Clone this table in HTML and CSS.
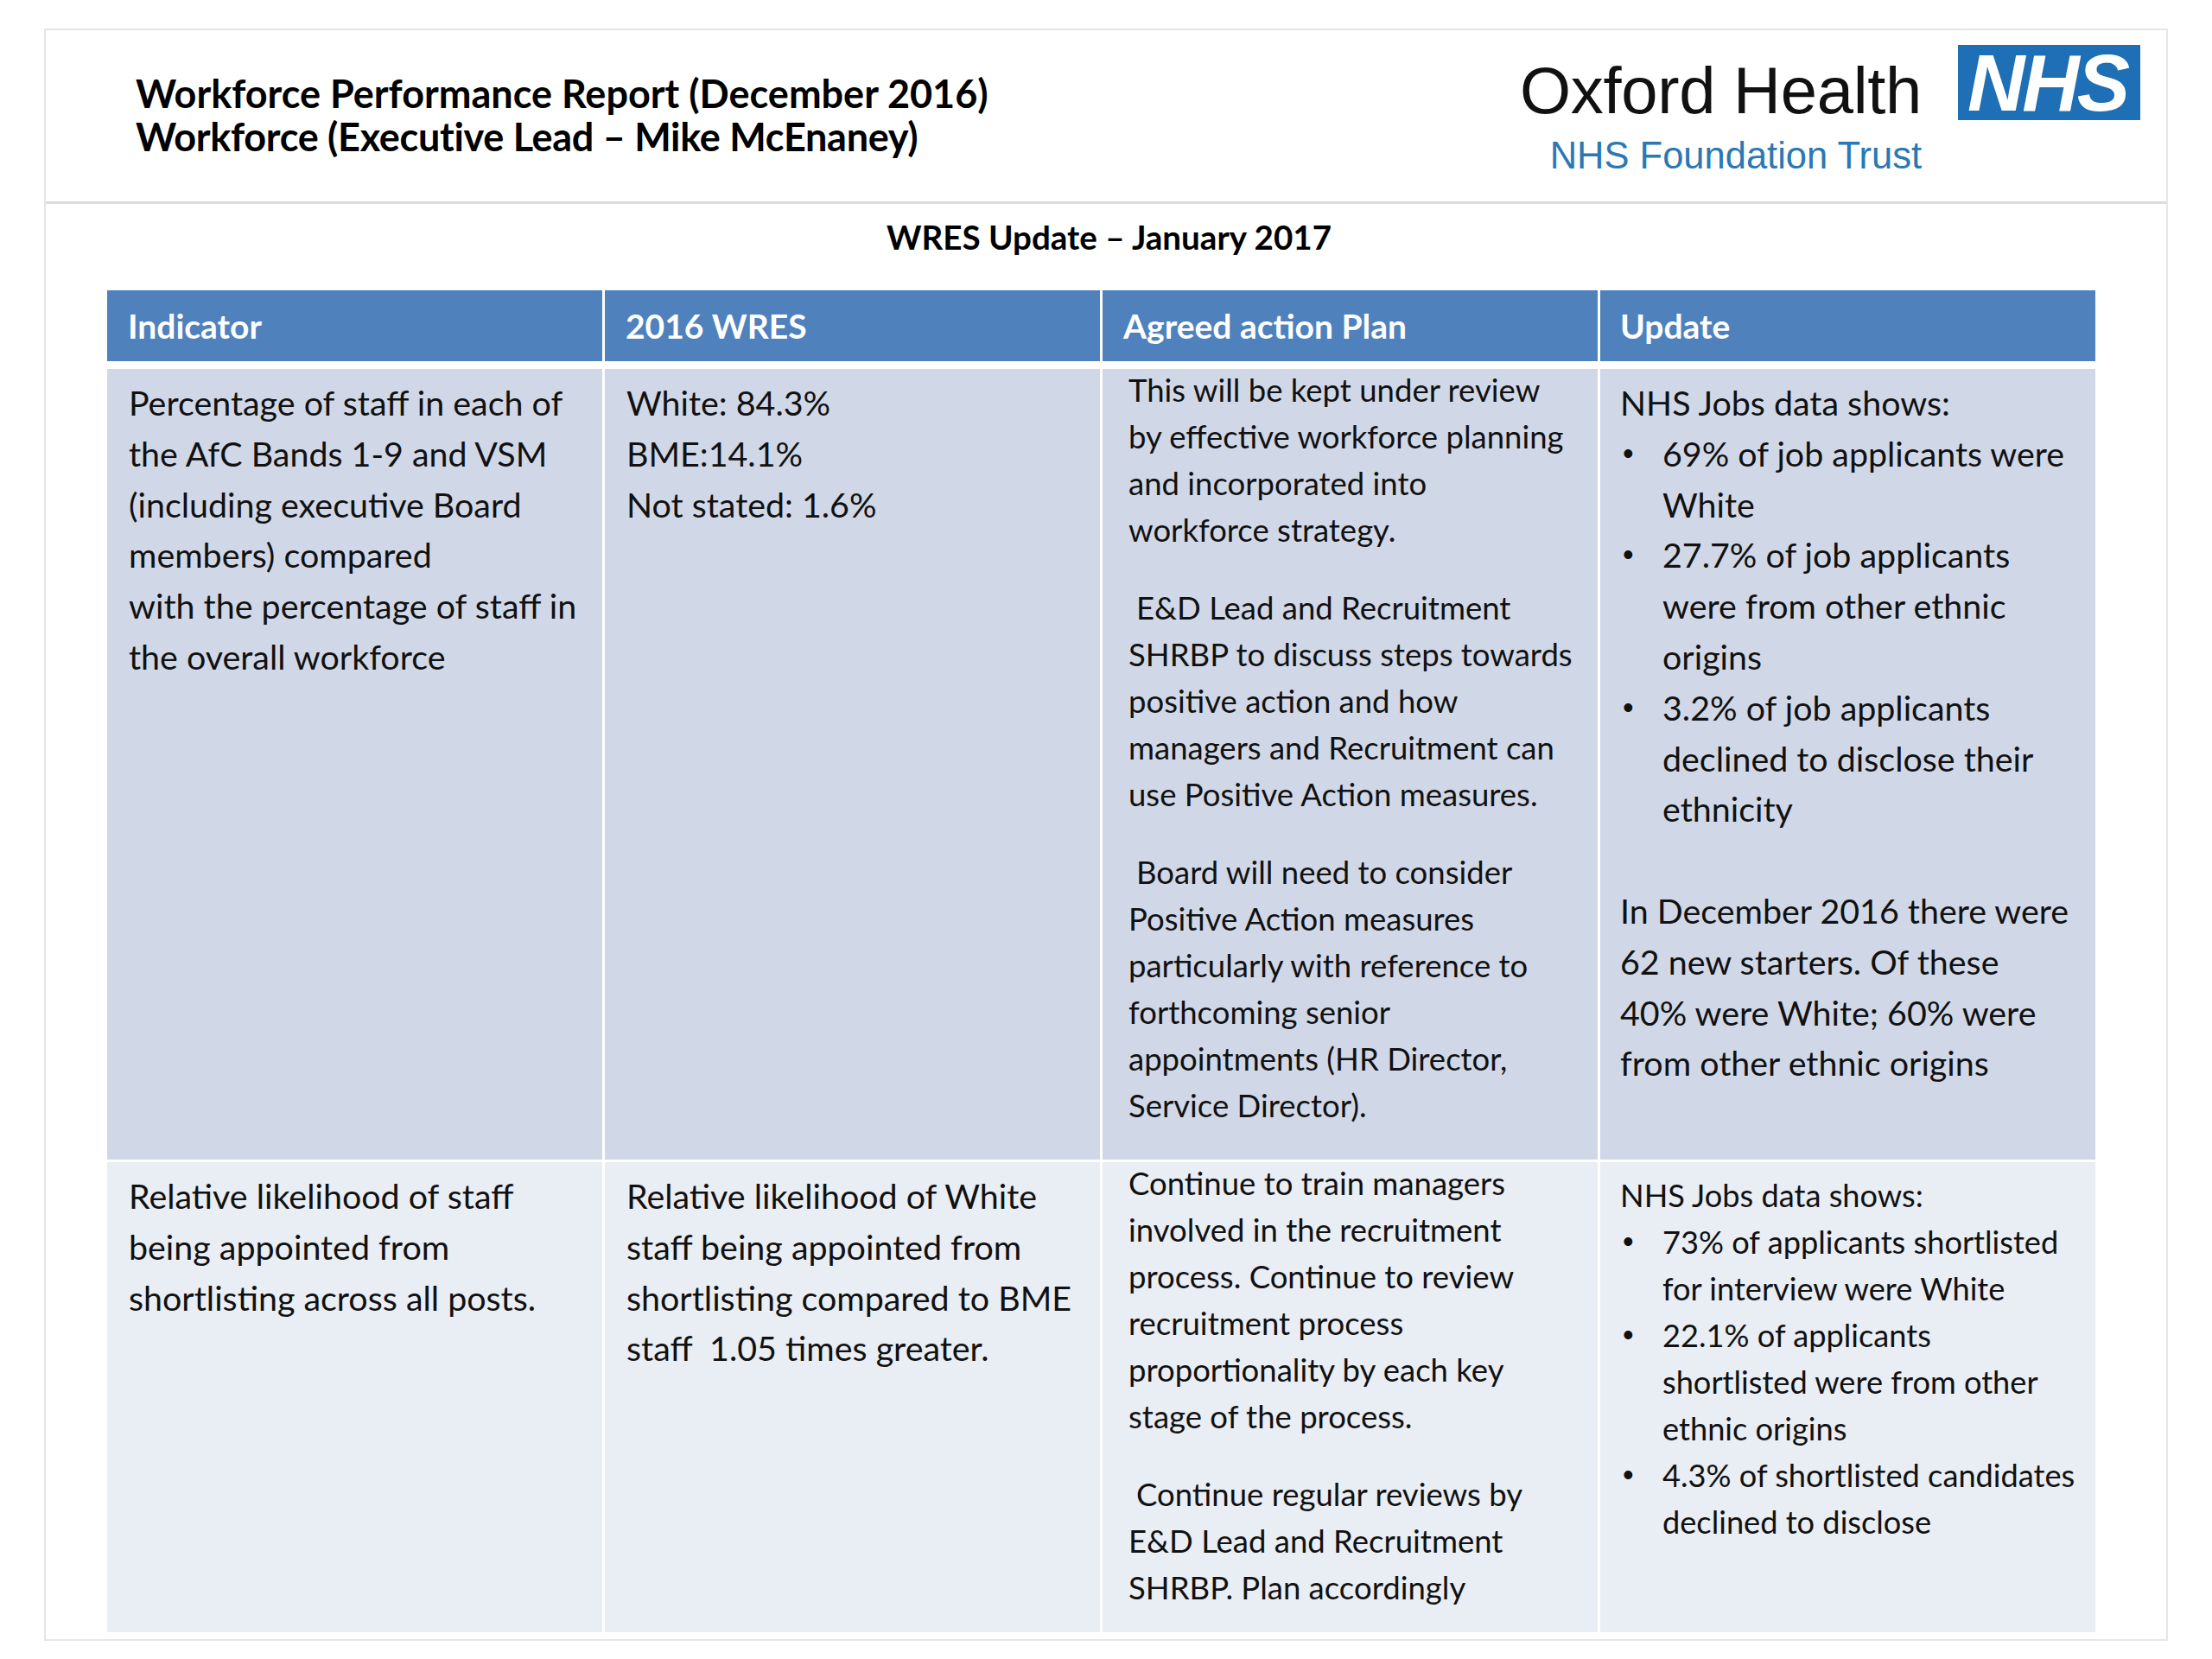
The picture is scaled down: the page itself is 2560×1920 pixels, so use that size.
FILE: index.html
```html
<!DOCTYPE html>
<html lang="en">
<head>
<meta charset="utf-8">
<title>WRES Update – January 2017</title>
<link rel="stylesheet" href="styles.css">
</head>
<body>
<div class="card">
  <header class="top">
    <div class="titles">
      <div>Workforce Performance Report (December 2016)</div>
      <div>Workforce (Executive Lead – Mike McEnaney)</div>
    </div>
    <div class="brand">
      <span class="oh">Oxford Health</span>
      <span class="nhs">NHS</span>
      <span class="trust">NHS Foundation Trust</span>
    </div>
  </header>
  <main class="content">
    <h1 class="sub">WRES Update – January 2017</h1>
    <div class="tbl">
      <div class="th">Indicator</div>
      <div class="th">2016 WRES</div>
      <div class="th">Agreed action Plan</div>
      <div class="th">Update</div>

      <div class="td r1 big">Percentage of staff in each of<br>the AfC Bands 1-9 and VSM<br>(including executive Board<br>members) compared<br>with the percentage of staff in<br>the overall workforce</div>
      <div class="td r1 big">White: 84.3%<br>BME:14.1%<br>Not stated: 1.6%</div>
      <div class="td r1 small plan">
        <p>This will be kept under review<br>by effective workforce planning<br>and incorporated into<br>workforce strategy.</p>
        <p class="ind">E&amp;D Lead and Recruitment<br>SHRBP to discuss steps towards<br>positive action and how<br>managers and Recruitment can<br>use Positive Action measures.</p>
        <p class="ind">Board will need to consider<br>Positive Action measures<br>particularly with reference to<br>forthcoming senior<br>appointments (HR Director,<br>Service Director).</p>
      </div>
      <div class="td r1 big upd">
        <p>NHS Jobs data shows:</p>
        <ul>
          <li><span class="b">•</span><span>69% of job applicants were<br>White</span></li>
          <li><span class="b">•</span><span>27.7% of job applicants<br>were from other ethnic<br>origins</span></li>
          <li><span class="b">•</span><span>3.2% of job applicants<br>declined to disclose their<br>ethnicity</span></li>
        </ul>
        <p class="gap">In December 2016 there were<br>62 new starters. Of these<br>40% were White; 60% were<br>from other ethnic origins</p>
      </div>

      <div class="td r2 big">Relative likelihood of staff<br>being appointed from<br>shortlisting across all posts.</div>
      <div class="td r2 big">Relative likelihood of White<br>staff being appointed from<br>shortlisting compared to BME<br>staff&nbsp; 1.05 times greater.</div>
      <div class="td r2 small plan">
        <p>Continue to train managers<br>involved in the recruitment<br>process. Continue to review<br>recruitment process<br>proportionality by each key<br>stage of the process.</p>
        <p class="ind">Continue regular reviews by<br>E&amp;D Lead and Recruitment<br>SHRBP. Plan accordingly</p>
      </div>
      <div class="td r2 small upd upd2">
        <p>NHS Jobs data shows:</p>
        <ul>
          <li><span class="b">•</span><span>73% of applicants shortlisted<br>for interview were White</span></li>
          <li><span class="b">•</span><span>22.1% of applicants<br>shortlisted were from other<br>ethnic origins</span></li>
          <li><span class="b">•</span><span>4.3% of shortlisted candidates<br>declined to disclose</span></li>
        </ul>
      </div>
    </div>
  </main>
</div>
</body>
</html>
```

FILE: styles.css
```css
html, body {
  margin: 0;
  padding: 0;
  background: #ffffff;
}

body {
  font-family: Lato, "Open Sans", sans-serif;
  color: #111111;
}

.card {
  box-sizing: border-box;
  width: 2458px;
  height: 1866px;
  margin: 33px 0 0 51px;
  border: 2px solid #e6e6e6;
  background: #ffffff;
}

.top {
  box-sizing: border-box;
  height: 201px;
  border-bottom: 3px solid #dcdcdc;
  display: flex;
  justify-content: space-between;
  align-items: center;
  padding: 0 30px 0 104px;
}

.titles {
  font-weight: 700;
  font-size: 45px;
  line-height: 50px;
  color: #000000;
  padding-bottom: 2px;
}

.titles div + div {
  letter-spacing: -0.3px;
}

.brand {
  align-self: flex-start;
  margin-top: 17px;
  display: grid;
  grid-template-columns: auto 211px;
  column-gap: 42px;
  font-family: "Liberation Sans", Arial, sans-serif;
}

.oh {
  font-size: 76px;
  line-height: 76px;
  padding-top: 15px;
  color: #111111;
  text-align: right;
  letter-spacing: -0.3px;
}

.nhs {
  height: 87px;
  background: #1f6fb6;
  color: #ffffff;
  font-weight: 700;
  font-style: italic;
  font-size: 92px;
  line-height: 88px;
  letter-spacing: -3px;
  text-align: center;
  padding-right: 4px;
  box-sizing: border-box;
}

.trust {
  grid-column: 1;
  text-align: right;
  font-size: 43.5px;
  line-height: 44px;
  margin-top: 15px;
  color: #2a78b4;
}

.content {
  padding: 13px 0 0 71px;
}

.sub {
  box-sizing: border-box;
  margin: 0 0 37px 0;
  width: 2301px;
  padding-left: 18px;
  text-align: center;
  font-size: 38.6px;
  line-height: 50px;
  font-weight: 700;
  color: #000000;
}

.tbl {
  width: 2301px;
  display: grid;
  grid-template-columns: repeat(4, 1fr);
  grid-template-rows: 88px 915px 544px;
  column-gap: 3px;
  row-gap: 3px;
}

.th {
  box-sizing: border-box;
  height: 82px;
  background: #4f81bd;
  color: #ffffff;
  font-weight: 700;
  font-size: 39px;
  display: flex;
  align-items: center;
  padding-left: 24px;
  white-space: nowrap;
}

.th:nth-child(4) { padding-left: 23px; }

.td {
  box-sizing: border-box;
  white-space: nowrap;
  padding-left: 25px;
}

.r1 { background: #d0d8e8; }
.r2 { background: #e9edf4; }

.big {
  font-size: 39.4px;
  line-height: 58.8px;
  padding-top: 10px;
}

.small {
  font-size: 36.5px;
  line-height: 54px;
  padding-top: 0;
}

.td p { margin: 0; }

.plan { padding-left: 30px; }
.plan p:first-child { margin-top: -3px; }
.plan p + p { margin-top: 36px; }
.plan .ind { text-indent: 9px; }

.upd { padding-left: 23px; }
.upd2 { padding-top: 11px; font-size: 36.2px; }

.upd ul {
  list-style: none;
  margin: 0;
  padding: 0;
}

.upd li {
  display: grid;
  grid-template-columns: 49px auto;
}

.upd .b {
  font-family: "Liberation Sans", Arial, sans-serif;
  font-size: 36px;
  padding-left: 3px;
}

.upd .gap { margin-top: 58.8px; }
```
